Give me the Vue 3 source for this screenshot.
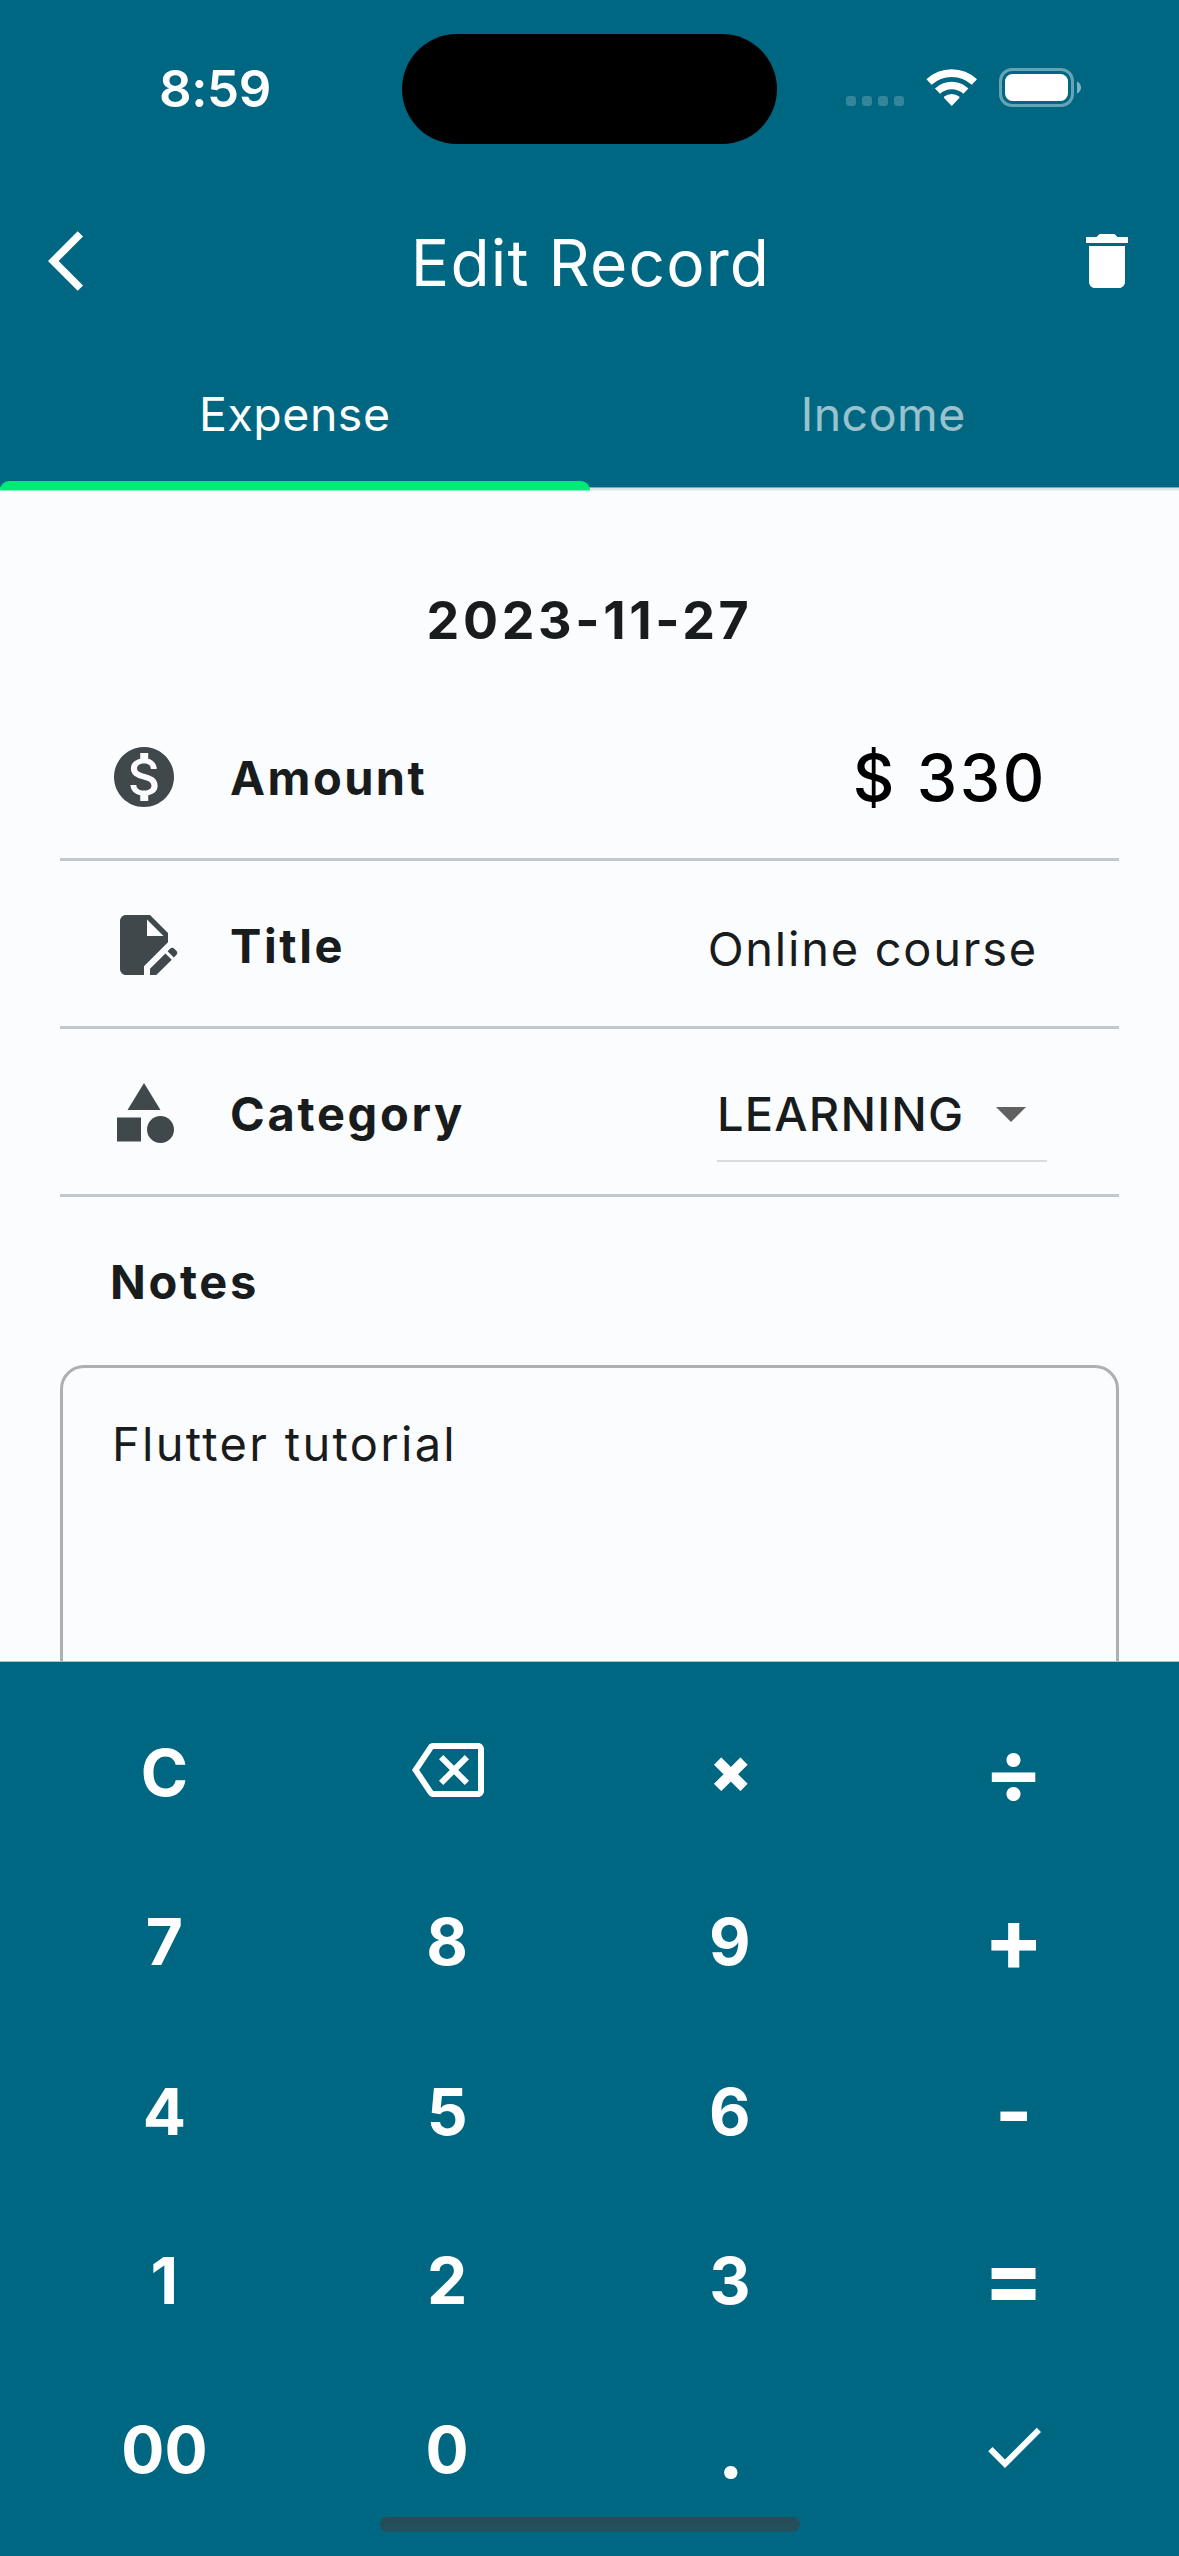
<script setup>
import { ref } from 'vue'

const activeTab = ref('Expense')
const tabs = ['Expense', 'Income']

const keys = [
  { label: 'C' },
  { icon: 'backspace', label: 'backspace' },
  { label: '×', kind: 'times' },
  { label: '÷', kind: 'divide' },
  { label: '7' },
  { label: '8' },
  { label: '9' },
  { label: '+', kind: 'plus' },
  { label: '4' },
  { label: '5' },
  { label: '6' },
  { label: '-', kind: 'minus' },
  { label: '1' },
  { label: '2' },
  { label: '3' },
  { label: '=', kind: 'equals' },
  { label: '00' },
  { label: '0' },
  { label: '.', kind: 'point' },
  { icon: 'check', label: 'check' },
]
</script>

<template>
  <div class="screen">
    <header class="header">
      <div class="status">
        <div class="time">8:59</div>
        <div class="island"></div>
        <div class="signals">
          <svg class="dots" width="58" height="40" viewBox="0 0 58 40">
            <rect x="0" y="28" width="10" height="10" rx="3" />
            <rect x="16" y="28" width="10" height="10" rx="3" />
            <rect x="32" y="28" width="10" height="10" rx="3" />
            <rect x="48" y="28" width="10" height="10" rx="3" />
          </svg>
          <svg class="wifi" width="52" height="40" viewBox="0 0 52 40">
            <path d="M3 14.1a33.2 33.2 0 0 1 45.4 0" fill="none" stroke="#fff" stroke-width="7.6" />
            <path d="M11.5 23.1a20.8 20.8 0 0 1 28.4 0" fill="none" stroke="#fff" stroke-width="7.4" />
            <path d="M25.7 38l-7.6-8a1.2 1.2 0 0 1 .1-1.4a11.7 11.7 0 0 1 15 0a1.2 1.2 0 0 1 .1 1.4z" fill="#fff" />
          </svg>
          <svg class="battery" width="84" height="40" viewBox="0 0 84 40">
            <rect x="1.5" y="1.5" width="72" height="36" rx="11.5" fill="none" stroke="#fff" stroke-opacity=".4" stroke-width="3" />
            <rect x="6" y="6" width="63" height="27" rx="7.5" fill="#fff" />
            <path d="M78 13.5c5.4 2 5.4 10 0 12z" fill="#fff" fill-opacity=".5" />
          </svg>
        </div>
      </div>

      <div class="toolbar">
        <svg class="icon" viewBox="0 0 24 24"><path d="M11.67 3.87L9.9 2.1 0 12l9.9 9.9 1.77-1.77L3.54 12z" /></svg>
        <h1 class="heading">Edit Record</h1>
        <svg class="icon" viewBox="0 0 24 24"><path d="M6 19c0 1.1.9 2 2 2h8c1.1 0 2-.9 2-2V7H6v12zM19 4h-3.5l-1-1h-5l-1 1H5v2h14V4z" /></svg>
      </div>

      <nav class="tabs">
        <div v-for="tab in tabs" :key="tab" class="tab" :class="{ active: tab === activeTab }" @click="activeTab = tab">
          <span class="tab-label">{{ tab }}</span>
          <span class="indicator"></span>
        </div>
      </nav>
    </header>

    <main class="form">
      <div class="date">2023-11-27</div>

      <div class="row">
        <svg class="icon" viewBox="0 0 24 24"><path d="M12 2C6.48 2 2 6.48 2 12s4.48 10 10 10 10-4.48 10-10S17.52 2 12 2zm1.41 16.09V20h-2.67v-1.93c-1.71-.36-3.16-1.46-3.27-3.4h1.96c.1 1.05.82 1.87 2.65 1.87 1.96 0 2.4-.98 2.4-1.59 0-.83-.44-1.61-2.67-2.14-2.48-.6-4.18-1.62-4.18-3.67 0-1.72 1.39-2.84 3.11-3.21V4h2.67v1.95c1.86.45 2.79 1.86 2.85 3.39H14.3c-.05-1.11-.64-1.87-2.22-1.87-1.5 0-2.4.68-2.4 1.64 0 .84.65 1.39 2.67 1.91s4.18 1.39 4.18 3.91c-.01 1.83-1.38 2.83-3.12 3.16z" /></svg>
        <span class="label amount-label">Amount</span>
        <span class="amount">$ 330</span>
      </div>

      <div class="row">
        <svg class="icon" viewBox="0 0 24 24">
          <path fill-rule="evenodd" d="M6 2h8l6 6v3.1l-8 8V22H6c-1.1 0-2-.9-2-2V4c0-1.1.9-2 2-2zM13 3.5V9h5.5z" />
          <path d="M14 22v-2.1l5.15-5.1 2.1 2.1L16.1 22zM19.85 14.1l.85-.85a1 1 0 0 1 1.4 0l.65.65a1 1 0 0 1 0 1.4l-.8.9z" />
        </svg>
        <span class="label">Title</span>
        <span class="title-value">Online course</span>
      </div>

      <div class="row">
        <svg class="icon" viewBox="0 0 24 24">
          <path d="M12 2l-5.5 9h11zM3 13.5h8v8H3z" />
          <circle cx="17.5" cy="17.5" r="4.5" />
        </svg>
        <span class="label category-label">Category</span>
        <span class="select">
          <span class="select-text">LEARNING</span>
          <svg class="icon caret" viewBox="0 0 24 24"><path d="M7 10l5 5 5-5z" /></svg>
        </span>
      </div>

      <div class="notes-head">Notes</div>
      <div class="notes">Flutter tutorial</div>
    </main>

    <section class="keypad">
      <div v-for="key in keys" :key="key.label" class="key">
        <svg v-if="key.icon === 'backspace'" class="icon" viewBox="0 0 24 24"><path d="M22 3H7c-.69 0-1.23.35-1.59.88L0 12l5.41 8.11c.36.53.9.89 1.59.89h15c1.1 0 2-.9 2-2V5c0-1.1-.9-2-2-2zm0 16H7.07L2.4 12l4.66-7H22v14zm-11.59-2L14 13.41 17.59 17 19 15.59 15.41 12 19 8.41 17.59 7 14 10.59 10.41 7 9 8.41 12.59 12 9 15.59z" /></svg>
        <svg v-else-if="key.icon === 'check'" class="icon" viewBox="0 0 24 24"><path d="M9 16.17L4.83 12l-1.42 1.41L9 19 21 7l-1.41-1.41z" /></svg>
        <span v-else class="key-text" :class="key.kind">{{ key.label }}</span>
      </div>
      <div class="home-bar"></div>
    </section>
  </div>
</template>

<style>
body {
  margin: 0;
}
</style>

<style scoped>
.screen {
  display: flex;
  flex-direction: column;
  width: 1179px;
  height: 2556px;
  overflow: hidden;
  background: #fbfcfe;
  color: #191c1d;
  font-family: Inter, "Liberation Sans", sans-serif;
}
.icon {
  display: block;
  flex: none;
  width: 72px;
  height: 72px;
  fill: currentColor;
}

/* header */
.header {
  flex: none;
  background: #006783;
  color: #fff;
}
.status {
  display: flex;
  align-items: flex-start;
  height: 177px;
}
.time {
  box-sizing: border-box;
  width: 402px;
  padding: 59px 0 0 159px;
  font-size: 51px;
  font-weight: 600;
  line-height: 60px;
  letter-spacing: -0.4px;
}
.island {
  width: 375px;
  height: 110px;
  margin-top: 34px;
  border-radius: 55px;
  background: #000;
}
.signals {
  display: flex;
  padding: 68px 0 0 69px;
}
.dots {
  fill: rgba(255, 255, 255, 0.2);
}
.wifi {
  margin-left: 22px;
}
.battery {
  margin-left: 21px;
}
.toolbar {
  display: flex;
  align-items: center;
  justify-content: space-between;
  height: 168px;
  padding: 0 36px 0 48px;
}
.heading {
  margin: 0 10px 0 0;
  padding-top: 3px;
  font-size: 64px;
  font-weight: 400;
  line-height: 80px;
  letter-spacing: 1.14px;
}
.tabs {
  display: flex;
  height: 146px;
  background: linear-gradient(#006783 142px, #80a9b8 142px 143px, #dce3e9 143px 145px, #ebf0f4 145px);
}
.tab {
  display: flex;
  flex: 1;
  flex-direction: column;
  justify-content: space-between;
}
.tab-label {
  padding: 41px 2px 0 0;
  text-align: center;
  font-size: 46.4px;
  line-height: 56px;
  letter-spacing: 0.56px;
  opacity: 0.6;
}
.indicator {
  height: 10px;
  border-radius: 9px 9px 0 0;
}
.active .tab-label {
  padding-right: 0;
  opacity: 1;
}
.active .indicator {
  background: linear-gradient(#00e979 9px, #80f3bc 9px);
}

/* form */
.form {
  flex: 1;
  display: flex;
  flex-direction: column;
  min-height: 0;
  overflow: hidden;
  padding: 0 60px;
}
.date {
  box-sizing: border-box;
  flex: none;
  height: 202px;
  padding-top: 99px;
  text-align: center;
  font-size: 52px;
  font-weight: 700;
  line-height: 62px;
  letter-spacing: 3.64px;
}
.row {
  display: flex;
  flex: none;
  align-items: center;
  box-sizing: border-box;
  height: 168px;
  padding: 3px 72px 0 48px;
  border-bottom: 3px solid #bfc8cc;
}
.row .icon {
  color: #40484b;
}
.label {
  flex: 1;
  padding-top: 2px;
  padding-left: 50px;
  font-size: 47px;
  font-weight: 700;
  line-height: 56px;
  letter-spacing: 2.6px;
}
.amount-label {
  letter-spacing: 2.45px;
}
.category-label {
  letter-spacing: 2.69px;
}
.amount {
  padding-top: 2px;
  color: #000;
  font-size: 64.5px;
  font-weight: 500;
  line-height: 78px;
  letter-spacing: 2.57px;
}
.title-value {
  padding: 8px 9px 0 0;
  font-size: 47px;
  line-height: 56px;
  letter-spacing: 1.75px;
}
.select {
  display: flex;
  align-items: center;
  justify-content: space-between;
  box-sizing: border-box;
  width: 330px;
  height: 98px;
  border-bottom: 2px solid #dadbdd;
}
.select-text {
  padding: 4px 0 0;
  font-size: 47px;
  font-weight: 500;
  line-height: 56px;
  letter-spacing: 1.2px;
}
.select .caret {
  margin: 2px 0 0;
  color: #616161;
}
.notes-head {
  flex: none;
  padding: 57px 0 55px 50px;
  font-size: 47px;
  font-weight: 700;
  line-height: 56px;
  letter-spacing: 2.65px;
}
.notes {
  flex: none;
  box-sizing: border-box;
  height: 500px;
  padding: 48px 49px;
  border: 3px solid #adafb0;
  border-radius: 24px;
  font-size: 47px;
  line-height: 56px;
  letter-spacing: 2.3px;
}

/* keypad */
.keypad {
  position: relative;
  display: grid;
  flex: none;
  grid-template-columns: repeat(4, 1fr);
  grid-template-rows: repeat(5, 169.2px);
  box-sizing: border-box;
  height: 895px;
  padding: 23.6px 24px 0;
  border-top: 1px solid #a6c5d0;
  background: #006783;
  color: #fff;
}
.key {
  display: flex;
  align-items: center;
  justify-content: center;
}
.key-text {
  padding: 7px 2px 0 0;
  font-size: 64px;
  font-weight: 700;
  line-height: 1.2;
}
.key-text.times {
  padding: 0;
  font-size: 60px;
  font-weight: 900;
}
.key-text.divide {
  padding: 2px 0 0;
  font-size: 90px;
  font-weight: 600;
}
.key-text.plus {
  padding: 0;
  font-size: 89px;
}
.key-text.minus {
  padding: 4px 0 0;
  font-size: 80px;
}
.key-text.equals {
  padding: 0;
  font-size: 90px;
}
.key-text.point {
  padding: 6px 0 0;
  font-size: 78px;
}
.home-bar {
  position: absolute;
  bottom: 24px;
  left: 380px;
  width: 420px;
  height: 15px;
  border-radius: 8px;
  background: linear-gradient(#284b55, #22515f);
}
</style>
